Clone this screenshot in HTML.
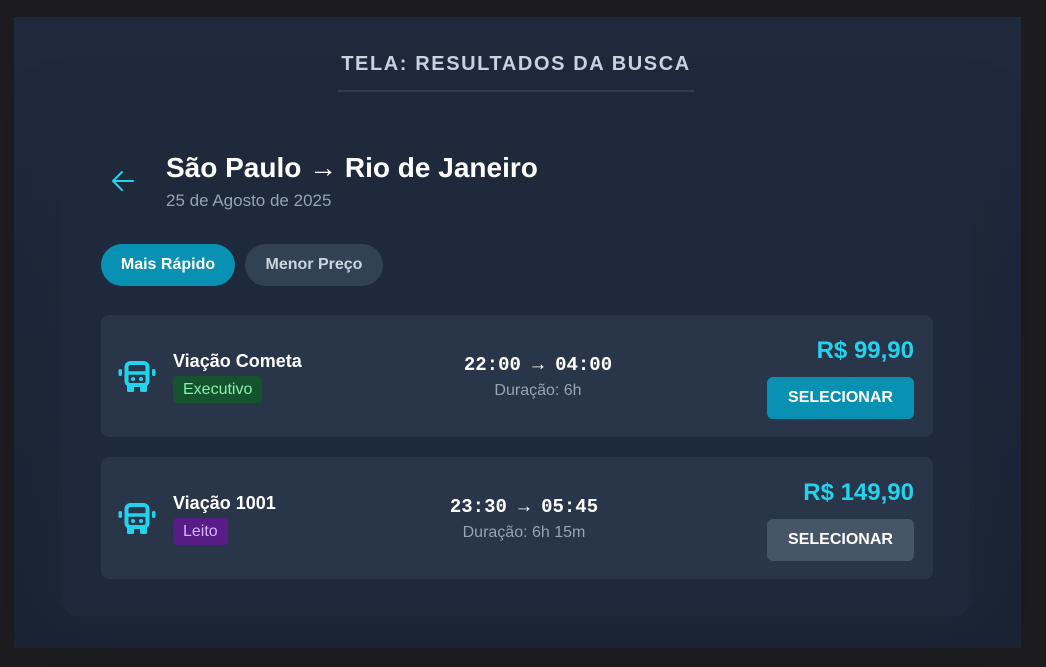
<!DOCTYPE html>
<html><head><meta charset="utf-8"><style>
*{margin:0;padding:0;box-sizing:border-box}
body{width:1046px;height:667px;background:#1c1c1e;font-family:"Liberation Sans",sans-serif;position:relative;overflow:hidden}
.panel{position:absolute;left:14px;top:17px;width:1007px;height:631px;background:linear-gradient(#1f2a3d,#1b2334)}
.title{position:absolute;left:338px;top:53px;width:356px;text-align:center;color:#cbd5e1;font-weight:bold;font-size:20px;letter-spacing:1.6px;padding-bottom:14px;border-bottom:2px solid #334155}
.card{position:absolute;left:62px;top:112px;width:908px;height:504px;background:#1e293b;border-radius:16px;box-shadow:0 0 40px 10px rgba(30,41,59,.6)}
.abs{position:absolute}
.h1{left:166px;top:152px;color:#fff;font-weight:bold;font-size:28px}
.date{left:166px;top:191px;color:#94a3b8;font-size:17px}
.pill{position:absolute;top:244px;height:42px;border-radius:21px;font-weight:bold;font-size:16px;line-height:42px;text-align:center}
.row{position:absolute;left:101px;width:832px;height:122px;background:#293548;border-radius:8px}
.name{position:absolute;left:72px;color:#fff;font-weight:bold;font-size:18px}
.tag{position:absolute;left:72px;height:27px;line-height:27px;padding:0 10px;border-radius:4px;font-size:16px}
.time{position:absolute;width:240px;text-align:center;font-family:"Liberation Mono",monospace;font-weight:bold;font-size:19px;color:#fff}
.dur{position:absolute;width:240px;text-align:center;color:#94a3b8;font-size:16px}
.price{position:absolute;right:19px;color:#22d3ee;font-weight:bold;font-size:24px}
.btn{position:absolute;right:19px;width:147px;height:42px;border-radius:6px;color:#fff;font-weight:bold;font-size:16px;line-height:42px;text-align:center}
</style></head><body>
<div class="panel"></div>
<div class="title">TELA: RESULTADOS DA BUSCA</div>
<div class="card"></div>
<svg class="abs" style="left:111px;top:170px" width="24" height="22" viewBox="0 0 24 22"><path d="M22 11H2M11 2L2 11l9 9" fill="none" stroke="#22d3ee" stroke-width="2" stroke-linecap="round" stroke-linejoin="round"/></svg>
<div class="abs h1">São Paulo → Rio de Janeiro</div>
<div class="abs date">25 de Agosto de 2025</div>
<div class="pill" style="left:101px;width:134px;background:#0891b2;color:#fff">Mais Rápido</div>
<div class="pill" style="left:245px;width:138px;background:#334155;color:#cbd5e1">Menor Preço</div>

<div class="row" style="top:315px">
<svg class="abs" style="left:17px;top:46px" width="38" height="32" viewBox="0 0 38 32"><rect x="8.5" y="2" width="21" height="22" rx="4" fill="none" stroke="#22d3ee" stroke-width="4"/><path d="M8 12h22" stroke="#22d3ee" stroke-width="3.5"/><rect x="9" y="22" width="7" height="9" rx="1.5" fill="#22d3ee"/><rect x="22" y="22" width="7" height="9" rx="1.5" fill="#22d3ee"/><circle cx="15" cy="18" r="2" fill="#22d3ee"/><circle cx="23" cy="18" r="2" fill="#22d3ee"/><rect x="0.5" y="8" width="3.5" height="7" rx="1.7" fill="#22d3ee"/><rect x="34" y="8" width="3.5" height="7" rx="1.7" fill="#22d3ee"/></svg>
<div class="name" style="top:36px">Viação Cometa</div>
<div class="tag" style="top:61px;background:#14532d;color:#86efac">Executivo</div>
<div class="time" style="left:317px;top:39px">22:00 → 04:00</div>
<div class="dur" style="left:317px;top:67px">Duração: 6h</div>
<div class="price" style="top:22px">R$ 99,90</div>
<div class="btn" style="top:62px;background:#0891b2">SELECIONAR</div>
</div>

<div class="row" style="top:457px">
<svg class="abs" style="left:17px;top:46px" width="38" height="32" viewBox="0 0 38 32"><rect x="8.5" y="2" width="21" height="22" rx="4" fill="none" stroke="#22d3ee" stroke-width="4"/><path d="M8 12h22" stroke="#22d3ee" stroke-width="3.5"/><rect x="9" y="22" width="7" height="9" rx="1.5" fill="#22d3ee"/><rect x="22" y="22" width="7" height="9" rx="1.5" fill="#22d3ee"/><circle cx="15" cy="18" r="2" fill="#22d3ee"/><circle cx="23" cy="18" r="2" fill="#22d3ee"/><rect x="0.5" y="8" width="3.5" height="7" rx="1.7" fill="#22d3ee"/><rect x="34" y="8" width="3.5" height="7" rx="1.7" fill="#22d3ee"/></svg>
<div class="name" style="top:36px">Viação 1001</div>
<div class="tag" style="top:61px;background:#581c87;color:#d8b4fe">Leito</div>
<div class="time" style="left:303px;top:39px">23:30 → 05:45</div>
<div class="dur" style="left:303px;top:67px">Duração: 6h 15m</div>
<div class="price" style="top:22px">R$ 149,90</div>
<div class="btn" style="top:62px;background:#475569">SELECIONAR</div>
</div>
</body></html>
